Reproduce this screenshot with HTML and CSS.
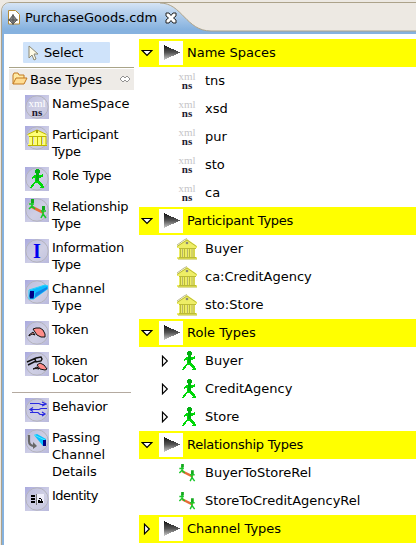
FILE: index.html
```
<!DOCTYPE html>
<html lang="en">
<head>
<meta charset="utf-8">
<title>PurchaseGoods.cdm</title>
<link rel="stylesheet" href="styles.css">
</head>
<body>
<svg class="defs" aria-hidden="true">
  <defs>
    <linearGradient id="tabfill" x2="0" y2="1"><stop stop-color="#d5e4f5"/><stop offset=".25" stop-color="#bcd4ee"/><stop offset=".85" stop-color="#86b2df"/><stop offset="1" stop-color="#86b2df"/></linearGradient>
    <linearGradient id="arrowfill" x2="0" y2="1"><stop stop-color="#111"/><stop offset=".5" stop-color="#555"/><stop offset="1" stop-color="#ccc"/></linearGradient>
    <linearGradient id="tilefill" x2="1" y2="1"><stop stop-color="#aaaade"/><stop offset=".55" stop-color="#cecee6"/><stop offset="1" stop-color="#b8b8dc"/></linearGradient>
  </defs>
  <symbol id="tile" viewBox="0 0 24 24"><path fill="url(#tilefill)" d="M0 0h24v24H0z"/><circle cx="12" cy="12" r="11.200" fill="#d2d2e0" fill-opacity=".4" stroke="#b4b4bd"/></symbol>
  <symbol id="open" viewBox="0 0 12 8"><path d="M1.200 1.500h9.600L6 6.300z" fill="#fff" stroke="#000" stroke-width="1.200"/></symbol>
  <symbol id="closed" viewBox="0 0 8 12"><path d="M1.500 1.200v9.600L6.300 6z" fill="#fff" stroke="#000" stroke-width="1.200"/></symbol>
  <symbol id="arrow" viewBox="0 0 24 24"><path fill="#fff" d="M0 0h24v24H0z"/><path d="M5 4l16 7.500L5 19z" fill="url(#arrowfill)" shape-rendering="crispEdges"/></symbol>
  <symbol id="bank" viewBox="0 0 24 24"><path d="M2 9l10-7 10 7v2H2zM4 11h16v9H4zM2 20h20v2H2z" fill="#eeee66"/><path d="M2 9.500L12 3l9.500 6.500M4 11.500h17M4 20.500h17M3 22h19M5.500 12v8M9.500 12v8M14.500 12v8M19 12v8" fill="none" stroke="#bcbc36"/><path d="M2 8l7-5 3-1.500M7.500 12v8M12.500 12v8M17 12v8" fill="none" stroke="#aaa76c" stroke-width=".8"/><circle cx="12" cy="6" r="1.300" fill="#888878"/></symbol>
  <symbol id="bankp" viewBox="0 0 24 24"><path d="M3 8l9-4 9 4v2H3zM4 10h3v9H4zM9 10h3v9H9zM13 10h3v9h-3zM18 10h3v9h-3zM3 18h19v2H3z" fill="#ff7"/><path d="M2.500 8.500L12 4l9.500 4.500M4 10.500h17M3 19.500h19M7.500 10v9M12.500 10v9M16.500 10v9M21 10v9" fill="none" stroke="#bdb600"/><path d="M11 4h2v3h-2z" fill="#aaa000"/></symbol>
  <symbol id="man" viewBox="0 0 24 24"><g shape-rendering="crispEdges"><path d="M11 2h3v1h1v3h-1v2h3V7h1v3h-2v1h-2v3h1v1h1v1h1v1h1v2h1v2h-4v-1h1v-1h-1v-1h-1v-1h-1v-1h-3v1h-1v2H8v1H7v1H5v-1h1v-2h1v-1h1v-1h1v-1h1v-4H8v1H7v-2h1V9h1V8h2V6h-1V3h1z" fill="#00d808"/><path d="M11 2h3v1h1v3h-1v8h-3V6h-1V3h1z" fill="#00b010"/></g></symbol>
  <symbol id="rel" viewBox="0 0 24 24"><path d="M7 9l12 6" stroke="#e56c38" stroke-width="2.600"/><g fill="none" stroke="#18c928" stroke-width="1.600"><path d="M7 3v6M4 6h5M7 8l-3 3M7 8l3 3M18 10v6M16 13h5M18 16l-2 4M18 16l3 4"/></g><path d="M6 1h3v4H6zM17 8h3v4h-3z" fill="#12a91c"/></symbol>
  <symbol id="pipe" viewBox="0 0 24 24"><path d="M5 10L20 5l3 1v3L9 19H5z" fill="#0cbcff"/><path d="M8 14l14-7v2L9 18z" fill="#1482e5"/><path d="M5 11h4v8H5l-1-3z" fill="#000084"/><path d="M4 10L20 5l3 1M4 10v9h5l1-7" fill="none" stroke="#20d4ff"/></symbol>
  <symbol id="token" viewBox="0 0 24 24"><g stroke="#111" stroke-width="1" stroke-linejoin="round"><path d="M8 8l3-1h4l3 2 2 4v3h-4l-4-2z" fill="#ff8d89"/><path d="M4 14l4-3 2 3-3-1-3 2z" fill="#ff9c98"/></g></symbol>
  <symbol id="locator" viewBox="0 0 24 24"><path d="M2 10l9-4 5-1 1 2-1 2-5 1-1-3M3 13l8-4" fill="none" stroke="#111" stroke-width="1.400"/><g stroke="#111"><path d="M12 13l3-2 4 2 3 4-2 1-5-1z" fill="#ff8d89"/><path d="M8 17l4-2 2 2-3-.5z" fill="#ff8d89"/></g></symbol>
  <symbol id="behavior" viewBox="0 0 24 24"><path d="M5 5.500h9l2 1h5M17 4l4 2-4 2M22 10.500h-6l-2 1H6M8 9.500l-3 2 3 2M5 14.500h8l2 2h5M17 14l3 2-3 2" fill="none" stroke="#2828e0" stroke-width="1.200"/></symbol>
  <symbol id="passing" viewBox="0 0 24 24"><path d="M4 6v6q0 5 6 5" fill="none" stroke="#686868" stroke-width="2.200"/><path d="M8 13l4 4-4 3z" fill="#686868"/><path d="M9 6l3-1 9 5v6l-3 1z" fill="#08bfff"/><path d="M9 6l11 5" stroke="#4beaff"/><path d="M18 11h3v6h-3z" fill="#000084"/></symbol>
  <symbol id="identity" viewBox="0 0 24 24"><path d="M12 7h7v9h-7z" fill="#eeeefa"/><path d="M6 8h4v2H6zM6 11h4v2H6zM6 14h4v2H6zM13 14h5v2h-5zM14 11h2v1h-2zM16 12h1v2h-1zM13 13h2v1h-2z" fill="#000"/><path d="M11.500 7v11" stroke="#777"/></symbol>
</svg>

<header class="tabbar">
  <svg class="tabshape" viewBox="0 0 416 34"><path d="M416 2.500H10Q1.500 3 1.500 12V34" fill="none" stroke="#aca28a"/><path d="M2 34V12Q2 3 10 3H160C182 3 186 31 211 31H416v3z" fill="url(#tabfill)"/><path d="M211 31.500h205v2.500H180z" fill="#86b2df"/><path d="M160 3C182 3 186 31 211 31H416" fill="none" stroke="#aca28a"/></svg>
  <div class="tab">
    <svg class="file" viewBox="0 0 14 16"><path d="M1.500.5h7l4 4V14h-11z" fill="#fff" stroke="#b58b36"/><path d="M6 5l4 5-4 4-4-4z" fill="#888" stroke="#444" stroke-width=".8"/><path d="M6 4v11M1 10h10" stroke="#555"/></svg>
    <span class="title">PurchaseGoods.cdm</span>
    <svg class="close" viewBox="0 0 12 12"><path d="M1 1h3l2 2.500L8 1h3v3L8.500 6 11 8v3H8L6 8.500 4 11H1V8l2.500-2L1 4z" fill="#fff" stroke="#222"/></svg>
  </div>
</header>
<main class="editor">
  <aside class="palette">
    <div class="select"><svg class="cursor" viewBox="0 0 12 16"><path d="M2 1v12l3-3 2 5 2-1-2-5h4z" fill="#fffbe6" stroke="#8b8874"/></svg><span>Select</span></div>
    <div class="drawer"><svg class="folder" viewBox="0 0 16 14"><path d="M1 12V3l1-2h4l1 2h5v3" fill="#ffeaa4" stroke="#c27821"/><path d="M1 12L4 6h11l-3 6z" fill="#ffdc91" stroke="#c27821"/></svg><span>Base Types</span><svg class="pin" viewBox="0 0 12 8"><path d="M4 1L1 4l3 3 2-2 2 2 3-3-3-3-2 2z" fill="#fff" stroke="#777" stroke-width=".8"/></svg></div>
    <ul class="tools">
      <li><span class="icon"><svg><use href="#tile"/></svg><span class="ns"><i>xml</i><b>ns</b></span></span><span class="label wide">NameSpace</span></li>
      <li><svg class="icon"><use href="#tile"/><use href="#bankp"/></svg><span class="label">Participant<br>Type</span></li>
      <li><svg class="icon"><use href="#tile"/><use href="#man"/></svg><span class="label">Role Type</span></li>
      <li><svg class="icon"><use href="#tile"/><use href="#rel"/></svg><span class="label">Relationship<br>Type</span></li>
      <li><span class="icon"><svg><use href="#tile"/></svg><span class="info">I</span></span><span class="label">Information<br>Type</span></li>
      <li><svg class="icon"><use href="#tile"/><use href="#pipe"/></svg><span class="label wide">Channel<br>Type</span></li>
      <li><svg class="icon"><use href="#tile"/><use href="#token"/></svg><span class="label wide">Token</span></li>
      <li><svg class="icon"><use href="#tile"/><use href="#locator"/></svg><span class="label">Token<br>Locator</span></li>
      <li class="rule"></li>
      <li><svg class="icon"><use href="#tile"/><use href="#behavior"/></svg><span class="label">Behavior</span></li>
      <li><svg class="icon"><use href="#tile"/><use href="#passing"/></svg><span class="label wide">Passing<br>Channel<br>Details</span></li>
      <li><svg class="icon"><use href="#tile"/><use href="#identity"/></svg><span class="label narrow">Identity</span></li>
    </ul>
  </aside>
  <section class="tree">
    <div class="group"><svg class="open"><use href="#open"/></svg><svg class="glyph"><use href="#arrow"/></svg><span>Name Spaces</span></div>
    <div class="row"><span class="ns pale"><i>xml</i><b>ns</b></span><span>tns</span></div>
    <div class="row"><span class="ns pale"><i>xml</i><b>ns</b></span><span>xsd</span></div>
    <div class="row"><span class="ns pale"><i>xml</i><b>ns</b></span><span>pur</span></div>
    <div class="row"><span class="ns pale"><i>xml</i><b>ns</b></span><span>sto</span></div>
    <div class="row"><span class="ns pale"><i>xml</i><b>ns</b></span><span>ca</span></div>
    <div class="group tight"><svg class="open"><use href="#open"/></svg><svg class="glyph"><use href="#arrow"/></svg><span>Participant Types</span></div>
    <div class="row"><svg class="glyph"><use href="#bank"/></svg><span>Buyer</span></div>
    <div class="row"><svg class="glyph"><use href="#bank"/></svg><span>ca:CreditAgency</span></div>
    <div class="row"><svg class="glyph"><use href="#bank"/></svg><span>sto:Store</span></div>
    <div class="group"><svg class="open"><use href="#open"/></svg><svg class="glyph"><use href="#arrow"/></svg><span>Role Types</span></div>
    <div class="row nested"><svg class="closed"><use href="#closed"/></svg><svg class="glyph"><use href="#man"/></svg><span>Buyer</span></div>
    <div class="row nested"><svg class="closed"><use href="#closed"/></svg><svg class="glyph"><use href="#man"/></svg><span>CreditAgency</span></div>
    <div class="row nested"><svg class="closed"><use href="#closed"/></svg><svg class="glyph"><use href="#man"/></svg><span>Store</span></div>
    <div class="group tight"><svg class="open"><use href="#open"/></svg><svg class="glyph"><use href="#arrow"/></svg><span>Relationship Types</span></div>
    <div class="row"><svg class="glyph small" viewBox="3 1 19 20"><use href="#rel" width="24" height="24"/></svg><span>BuyerToStoreRel</span></div>
    <div class="row"><svg class="glyph small" viewBox="3 1 19 20"><use href="#rel" width="24" height="24"/></svg><span>StoreToCreditAgencyRel</span></div>
    <div class="group shut"><svg class="closed"><use href="#closed"/></svg><svg class="glyph"><use href="#arrow"/></svg><span>Channel Types</span></div>
  </section>
</main>
</body>
</html>
```
FILE: styles.css
```
* { box-sizing: border-box; }
body { margin: 0; height: 545px; overflow: hidden; display: flex; flex-direction: column; background: #ede9e3; color: #000; font: 13px/17px "DejaVu Sans", sans-serif; }
svg { display: block; flex: none; }
.defs { position: absolute; width: 0; height: 0; }
.tabbar { position: relative; height: 34px; flex: none; }
.tabshape { position: absolute; inset: 0; width: 416px; height: 34px; }
.tab { position: relative; display: flex; align-items: center; padding: 9px 0 0 7px; height: 26px; }
.file { width: 14px; height: 16px; margin-right: 4px; }
.title { width: 133px; margin-right: 7px; }
.close { width: 12px; height: 12px; }
.editor { display: flex; flex: 1; margin-left: 1px; border-left: 1px solid #aca28a; box-shadow: inset 2px 0 #86b2df; background: #fff; padding: 5px 0 0 7px; }
.palette { width: 125px; margin-right: 5px; padding-top: 3px; flex: none; }
.select { display: flex; align-items: center; width: 87px; height: 21px; margin-left: 14px; padding-left: 4px; background: #cfe3fa; border-radius: 1px; letter-spacing: -.15px; }
.cursor { width: 12px; height: 16px; margin-right: 5px; }
.drawer { display: flex; align-items: center; height: 23px; margin-top: 4px; border-top: 1px solid #a9a488; background: #eeebe7; padding: 0 3px; box-shadow: inset 0 1px #fff; letter-spacing: -.05px; }
.folder { width: 16px; height: 14px; margin-right: 2px; }
.pin { width: 12px; height: 8px; margin-left: auto; }
.tools { list-style: none; margin: 5px 0 0; padding: 0; display: flex; flex-direction: column; gap: 7px; }
.tools li { display: flex; gap: 3px; padding-left: 16px; min-height: 24px; align-items: flex-start; }
.tools .rule { min-height: 1px; height: 1px; margin: -1px 3px -2px; background: #b4aaa0; }
.icon, .icon svg { width: 24px; height: 24px; flex: none; }
.icon { position: relative; }
.label { white-space: nowrap; letter-spacing: -.3px; }
.wide { letter-spacing: -.05px; }
.narrow { letter-spacing: -.5px; }
.ns { width: 18px; height: 18px; text-align: center; display: flex; flex-direction: column; }
.ns i { font: normal 11px/9px "Liberation Serif", serif; color: #fff; }
.ns b { font: 700 11px/8px "Liberation Serif", serif; color: #201830; }
.icon .ns { position: absolute; left: 3px; top: 4px; }
.icon .info { position: absolute; inset: 0; text-align: center; color: #00e; font: 700 20px/24px "Liberation Serif", serif; }
.pale i { color: #c5c5c8; }
.pale { margin: 0 3px; }
.tree { flex: 1; }
.group, .row { display: flex; align-items: center; height: 28px; white-space: nowrap; }
.group > span, .row > span:last-child { margin-top: -1px; }
.group { background: #ff0; padding-left: 2px; }
.tight { letter-spacing: -.25px; }
.open { width: 12px; height: 8px; margin-right: 6px; }
.closed { width: 8px; height: 12px; }
.glyph { width: 24px; height: 24px; margin-right: 4px; }
.shut { padding-left: 4px; }
.shut .closed { margin-right: 8px; }
.row { padding-left: 36px; }
.row > .glyph { margin-right: 6px; }
.row > .pale { margin-right: 9px; }
.nested { padding-left: 22px; }
.nested .closed { margin-right: 8px; }
.nested > .glyph { margin-right: 4px; }
.row > .small { width: 18px; height: 18px; margin: 0 9px 0 3px; }
```
